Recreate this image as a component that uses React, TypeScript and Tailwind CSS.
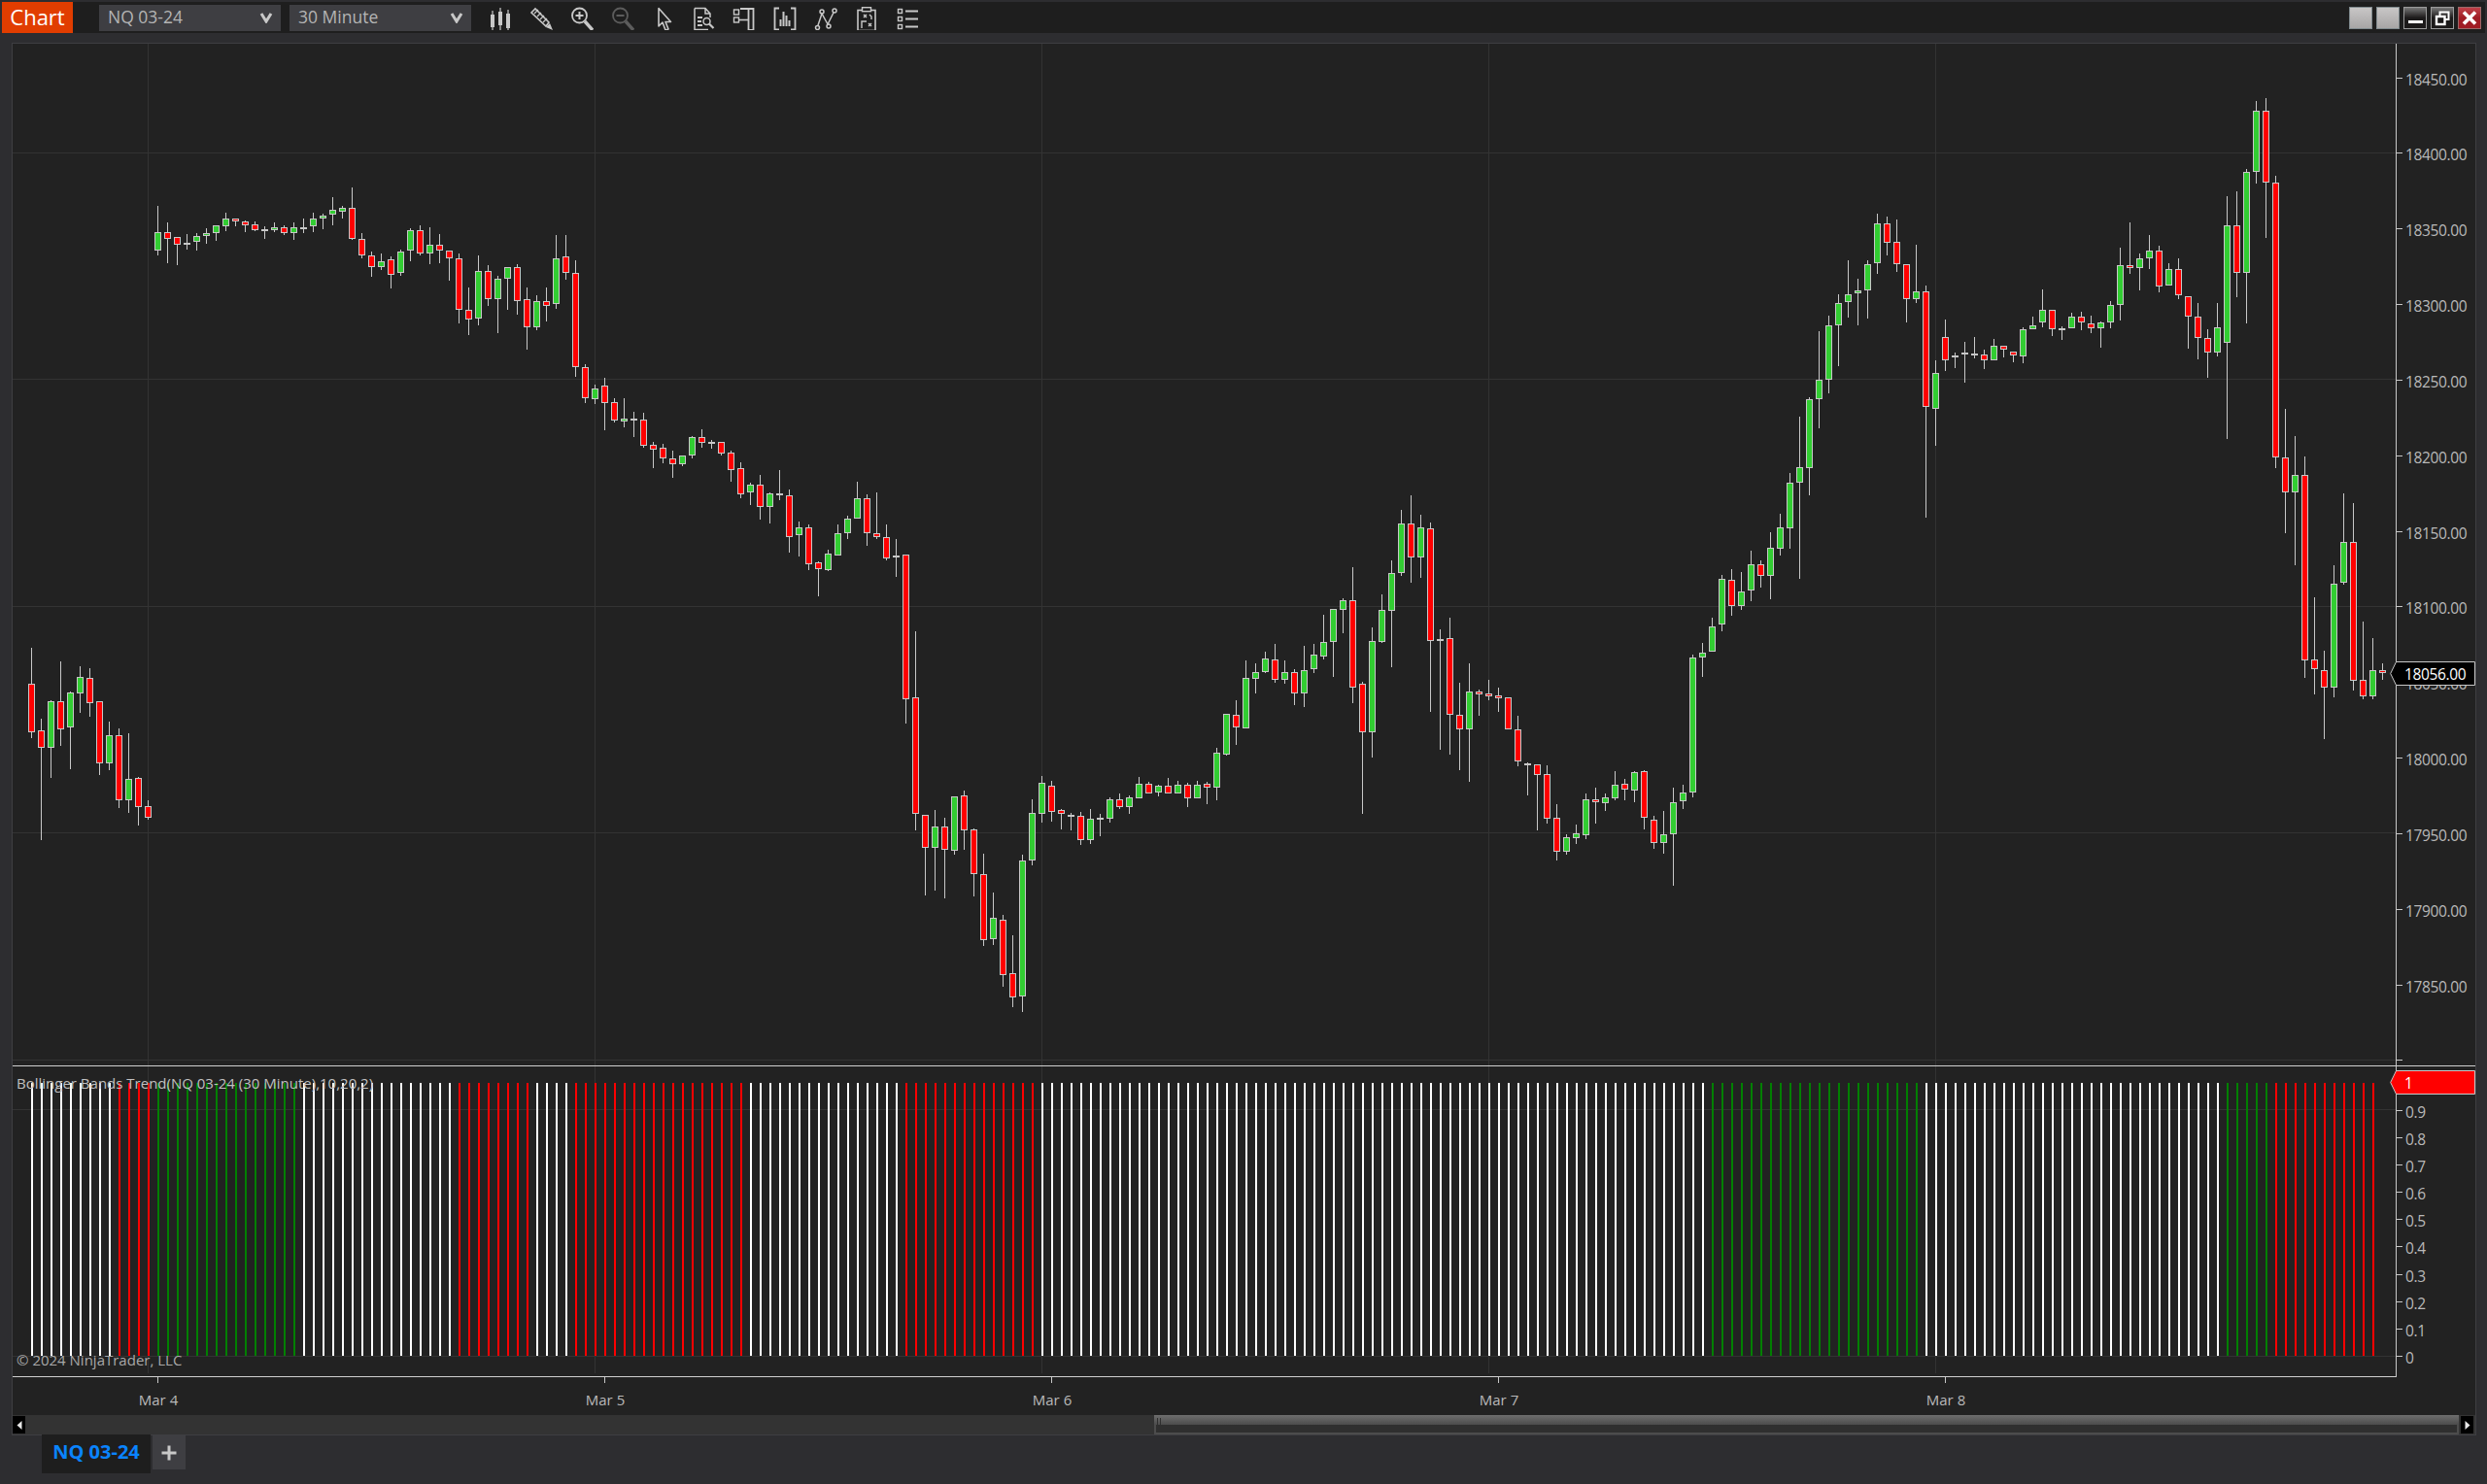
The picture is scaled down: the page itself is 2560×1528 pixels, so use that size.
import React from "react";

type Seg = { x: number; y0: number; k: number; d: string };

const SEGS: Seg[] = [
  { x: 0, y0: 640, k: 1 / 3, d: "r 82 193 341 360,r 300 337 389 675,g 243 247 389 483,r 123 247 332 384,g 216 220 326 456,g 138 172 221 282,r 144 175 251 294,r 247 247 437 474,g 309 352 437 459,r 330 352 551 576,g 345 487 551 591,r 480 484 572 630,r 552 571 605 612" },
  { x: 13, y0: 190, k: 670 / 1568, d: "g 51 115 158 171,r 91 115 132 190,r 127 127 144 194,d 120 141 144 157,g 117 125 139 159,g 105 118 123 143,g 98 99 118 136,g 67 83 100 112,r 81 83 88 101,r 87 88 99 115,r 89 95 109 112,d 101 108 111 131,g 92 102 111 114,r 99 102 116 122,g 92 104 118 133,g 82 102 107 117,g 69 83 100 115,g 71 74 83 108,g 30 62 72 98,g 52 55 65 82,r 8 55 130 133,r 118 130 172 178,r 162 172 198 222,g 167 184 198 206,r 174 181 217 250,g 157 162 214 220,g 105 111 160 185,r 99 109 165 171,g 103 146 165 192,r 120 144 160 190,r 158 160 179 232,r 165 179 303 335,r 247 301 326 363,g 171 209 324 339,r 195 209 275 293,g 219 228 275 358,g 199 200 228 302,r 191 200 280 314,r 247 277 345 398,g 267 282 343 351,r 248 282 292 330,g 122 177 289 300,r 122 174 214 229,r 183 212 439 463,r 432 439 516 527,g 483 492 518 529,r 466 485 526 592,r 514 525 568 573,g 514 565 570 585,d 548 564 566 608,r 550 567 629 634,r 620 628 638 683,r 624 635 661 672,r 641 659 675 707,g 654 654 675 679,g 605 609 654 660,r 590 609 622 634,d 615 621 625 637,r 620 621 648 653,r 642 647 687 716,r 670 684 746 756,g 718 724 743 772,r 700 724 778 807,g 741 745 776 817,d 688 744 748 761,r 736 750 849 887,g 812 825 846 896,r 820 825 914 929,r 907 911 926 992,g 879 890 928 931,g 818 839 893 893,g 799 806 839 854,g 716 757 806 806,r 747 757 839 871,r 742 839 849 854,r 818 849 900 906,d 854 895 898 945" },
  { x: 90, y0: 500, k: 550 / 1568, d: "r 202 203 628 698,r 428 622 965 1012,r 967 967 1062 1203,g 952 1002 1062 1189,r 975 1002 1070 1212,g 912 913 1071 1083,r 895 910 1013 1069,r 1005 1010 1141 1206,r 1080 1141 1335 1351,g 1195 1270 1332 1348,r 1260 1273 1436 1471,r 1320 1432 1503 1531,g 1083 1101 1501 1545,g 921 962 1101 1115,g 852 873 963 989,r 867 882 957 986,r 948 953 965 1009,d 962 967 971 1012,r 958 970 1042 1055,g 949 979 1040 1052,d 964 975 977 1029,g 915 922 977 989,r 905 922 943 949,g 909 916 943 964,g 855 876 917 917,r 870 876 903 903,g 878 882 900 912,r 858 882 903 903,g 867 879 903 903,r 872 879 917 944,g 867 879 917 917,r 870 876 888 935,g 770 785 888 924,g 671 671 789 793,r 630 674 711 761,g 514 565 712 712,g 522 546 566 610,g 488 508 546 550,r 465 511 571 579,g 513 548 571 582,r 539 546 611 644,g 470 543 611 650,g 465 497 538 550,g 379 460 501 510,g 363 363 458 562,g 331 335 364 433,r 239 337 592 639,r 577 583 723 964,g 416 457 723 798,g 319 366 458 462,g 220 258 367 533,g 71 112 258 265,r 29 110 212 285,g 86 124 210 271,r 108 126 455 664,d 422 450 453 775,r 388 449 672 790,r 579 674 717 835,g 522 603 717 870,r 599 603 614 676,r 570 611 620 629,r 593 617 623 664,r 622 622 717 717,r 676 717 811 824,r 813 814 820 909,r 819 819 849 1012,r 822 848 979 992,r 935 976 1074 1100,g 1024 1033 1074 1083,g 995 1022 1034 1052,g 905 922 1025 1038,r 887 922 928 992,g 905 916 931 955,g 838 879 917 924,r 862 876 893 924,g 838 842 894 929,r 835 839 974 1009" },
  { x: 167, y0: 90, k: 830 / 1568, d: "r 1417 1424 1470 1481,g 1407 1452 1470 1490,g 1362 1390 1452 1552,g 1356 1371 1388 1403,g 1103 1108 1371 1381,g 1081 1099 1108 1146,g 1031 1048 1098 1098,g 948 955 1044 1058,r 937 957 1008 1028,g 943 981 1008 1016,g 901 927 978 999,r 920 927 951 973,g 865 896 951 996,g 829 855 898 911,g 750 768 857 897,g 640 738 768 956,g 603 607 740 793,g 474 568 606 663,g 444 462 568 595,g 402 419 462 542,g 336 402 418 448,g 372 394 401 463,g 337 343 394 450,g 246 265 341 363,r 251 265 303 327,r 257 301 343 359,r 343 343 411 457,g 306 396 411 419,r 385 396 622 837,g 531 556 626 698,r 452 485 530 552,g 516 522 526 546,g 495 515 520 574,d 486 517 519 527,r 510 519 530 548,g 489 502 530 530,r 502 502 511 525,r 513 513 522 535,g 467 470 524 537,g 446 462 471 471,g 393 432 458 467,r 432 432 471 484,d 465 468 469 491,g 438 445 468 468,r 436 445 458 472,r 444 460 468 478,g 456 458 468 506,g 416 424 458 469,g 312 345 424 453,r 263 345 352 363,g 323 332 352 395,g 287 318 333 353,r 307 318 388 399,g 342 354 386 386,r 332 354 405 412,r 407 407 445 508,r 419 445 488 529,r 470 487 515 565,g 419 466 515 523,g 212 269 496 684,r 202 269 360 408,g 159 165 360 459,g 26 46 165 187,r 21 46 186 293,r 172 186 719 741,r 625 719 787 867,g 678 753 787 929,r 718 753 1114 1149,r 992 1112 1132 1181,r 1096 1134 1168 1268,g 929 966 1168 1186,g 790 885 964 967,r 809 885 1155 1173,r 1039 1153 1185 1190,g 1071 1134 1185 1190,r 1120 1133 1140 1152" },
];

type Candle = { cx: number; c: string; h: number; t: number; b: number; l: number };

const CANDLES: Candle[] = SEGS.flatMap((s) =>
  s.d.split(",").map((row, n) => {
    const [c, h, t, b, l] = row.split(" ");
    const f = (v: string) => s.y0 + Number(v) * s.k;
    return { cx: 32.5 + 10 * (s.x + n), c, h: f(h), t: f(t), b: f(b), l: f(l) };
  })
);

const FILL: Record<string, string> = { r: "#ff0000", g: "#32cd32", d: "#c8c8c8" };

function trendColor(i: number) {
  if (i <= 8) return "#ffffff";
  if (i <= 12) return "#ff0000";
  if (i <= 27) return "#008000";
  if (i <= 43) return "#ffffff";
  if (i <= 51) return "#ff0000";
  if (i <= 55) return "#ffffff";
  if (i <= 73) return "#ff0000";
  if (i <= 89) return "#ffffff";
  if (i <= 103) return "#ff0000";
  if (i <= 172) return "#ffffff";
  if (i <= 194) return "#008000";
  if (i <= 225) return "#ffffff";
  if (i <= 230) return "#008000";
  return "#ff0000";
}

const GRID_X = [152.5, 612.5, 1072.5, 1532.5, 1992.5];
const GRID_Y = [157.5, 390.5, 624.5, 857.5, 1091.5];
const PRICES = ["18450.00", "18400.00", "18350.00", "18300.00", "18250.00", "18200.00", "18150.00", "18100.00", "18050.00", "18000.00", "17950.00", "17900.00", "17850.00", ""];
const LEVELS = ["0.9", "0.8", "0.7", "0.6", "0.5", "0.4", "0.3", "0.2", "0.1", "0"];
const DATES = ["Mar 4", "Mar 5", "Mar 6", "Mar 7", "Mar 8"];

function PriceChart() {
  return (
    <svg width={2453} height={1052} viewBox="13 45 2453 1052" className="block">
      {GRID_X.map((x) => (
        <line key={x} x1={x} x2={x} y1={45} y2={1097} stroke="#333333" />
      ))}
      {GRID_Y.map((y) => (
        <line key={y} x1={13} x2={2466} y1={y} y2={y} stroke="#333333" />
      ))}
      {CANDLES.map((k) => {
        const top = Math.round(k.t) + 0.5;
        const bot = Math.max(Math.round(k.b) - 0.5, top + 1);
        return (
          <g key={k.cx}>
            <line x1={k.cx} x2={k.cx} y1={Math.round(k.h)} y2={Math.round(k.l)} stroke="#c8c8c8" />
            <rect x={k.cx - 3} y={top} width={6} height={bot - top} fill={FILL[k.c]} stroke="#c8c8c8" />
          </g>
        );
      })}
    </svg>
  );
}

function TrendChart() {
  return (
    <svg width={2453} height={319} viewBox="13 1098 2453 319" className="block">
      {GRID_X.map((x) => (
        <line key={x} x1={x} x2={x} y1={1098} y2={1414} stroke="#333333" />
      ))}
      <line x1={13} x2={2466} y1={1142.5} y2={1142.5} stroke="#333333" />
      <line x1={13} x2={2466} y1={1396.5} y2={1396.5} stroke="#333333" />
      {Array.from({ length: 242 }, (_, i) => (
        <rect key={i} x={32 + 10 * i} y={1115} width={2} height={281} fill={trendColor(i)} />
      ))}
    </svg>
  );
}

const ic = "#c8c8c8";

const ICONS: React.ReactNode[] = [
  <g key="candles" stroke={ic} fill={ic}>
    <path d="M4 4v20M12 1v23M20 3v21" fill="none" strokeWidth={1.2} />
    <rect x={2} y={8} width={4} height={13} stroke="none" />
    <rect x={10} y={5} width={4} height={14} stroke="none" />
    <rect x={18} y={7} width={4} height={15} stroke="none" />
  </g>,
  <g key="pencil" fill="none" stroke={ic}>
    <path d="M2 6L6 2L20 16L17 20Z" strokeWidth={1.6} />
    <path d="M5 7L9 3M8 10L12 6M11 13L15 9M14 16L18 12" strokeWidth={1.2} />
    <path d="M17 21L21 17L24 24Z" fill={ic} stroke="none" />
  </g>,
  <g key="zoomin" fill="none" stroke={ic}>
    <circle cx={9.5} cy={9} r={7.5} strokeWidth={1.8} />
    <path d="M5.5 9h8M9.5 5v8" strokeWidth={2} />
    <path d="M15 15L23 24" strokeWidth={3.4} />
  </g>,
  <g key="zoomout" fill="none" stroke="#5c5c5c">
    <circle cx={9.5} cy={9} r={7.5} strokeWidth={1.8} />
    <path d="M5.5 9h8" strokeWidth={2} />
    <path d="M15 15L23 24" strokeWidth={3.4} />
  </g>,
  <path key="cursor" d="M7 1.5V20L11 16L14 24L17 23L14 15.5H19.5Z" fill="none" stroke={ic} strokeWidth={1.6} strokeLinejoin="round" />,
  <g key="doc" fill="none" stroke={ic} strokeWidth={1.5}>
    <path d="M3 1.5H14L19 7V11M14 1.5V7H19M3 1.5V23.5H17" />
    <path d="M6 11h5M6 15h4M6 19h5" strokeWidth={1.8} />
    <circle cx={15.5} cy={15} r={3.5} />
    <path d="M18 17.5L22.5 22" strokeWidth={2.2} />
  </g>,
  <g key="databox" fill="none" stroke={ic}>
    <path d="M8 2H21.5V24H16.5V2" strokeWidth={1.8} />
    <rect x={1.5} y={3} width={5} height={5} strokeWidth={1.4} />
    <rect x={1.5} y={11} width={5} height={5} strokeWidth={1.4} />
    <path d="M6.5 13.5h10" strokeWidth={1.6} />
  </g>,
  <g key="bars" fill="none" stroke={ic}>
    <path d="M6 1.5H1.5V23.5H6M18 1.5H22.5V23.5H18" strokeWidth={1.8} />
    <path d="M7.5 13V20M10.5 5V20M13.5 9V20M16.5 14V20" strokeWidth={2} />
  </g>,
  <g key="nodes" fill="none" stroke={ic} strokeWidth={1.5}>
    <path d="M4 19L8 7L14 18L20 6" />
    <circle cx={3.5} cy={21.5} r={2} />
    <circle cx={8} cy={5} r={2} />
    <circle cx={15} cy={20} r={2} />
    <circle cx={21} cy={4} r={2} />
  </g>,
  <g key="clip" fill="none" stroke={ic} strokeWidth={1.4}>
    <rect x={3} y={3.5} width={18} height={21} strokeWidth={1.6} />
    <rect x={7.5} y={0.7} width={9} height={4} fill="#1e1e1e" />
    <path d="M9 8l3 3m0-3l-3 3M14 17l3 3m0-3l-3 3" />
    <path d="M7 22V15H12M15 8L17 10V13" />
  </g>,
  <g key="list" fill="none" stroke={ic}>
    <rect x={2.5} y={2.5} width={4} height={4} strokeWidth={1.4} />
    <rect x={2.5} y={10.5} width={4} height={4} strokeWidth={1.4} />
    <rect x={2.5} y={18.5} width={4} height={4} strokeWidth={1.4} />
    <path d="M10 4.5H23M10 12.5H23M10 20.5H23" strokeWidth={2} />
  </g>,
];

function Chevron() {
  return (
    <svg width={14} height={12} viewBox="0 0 14 12" className="ml-auto mr-[8px]">
      <path d="M2 2L7 10L12 2" fill="none" stroke="#c8c8c8" strokeWidth={3} />
    </svg>
  );
}

function SelectBox({ label }: { label: string }) {
  return (
    <div className="flex items-center w-[187px] h-[27px] mt-[3px] bg-[#3e3e42] pl-[9px] pb-[2px] text-[17.5px] leading-none text-[#b4b4b4]">
      <span>{label}</span>
      <Chevron />
    </div>
  );
}

function WinButton({ kind }: { kind: "gray" | "min" | "restore" | "close" }) {
  if (kind === "gray") {
    return <div className="w-[24px] h-[23px] border border-[#808a8e] bg-linear-to-b from-[#c8c6c6] to-[#a8a6a6]" />;
  }
  if (kind === "min") {
    return (
      <div className="w-[24px] h-[23px] border border-[#9a9a9a] bg-linear-to-b from-[#777777] via-[#1c1a1a] to-[#1c1a1a] flex items-end justify-center pb-[5px]">
        <div className="w-[15px] h-[3px] bg-white" />
      </div>
    );
  }
  if (kind === "restore") {
    return (
      <div className="w-[24px] h-[23px] border border-[#9a9a9a] bg-linear-to-b from-[#777777] via-[#1c1a1a] to-[#1c1a1a] flex items-center justify-center">
        <svg width={16} height={16} viewBox="0 0 16 16">
          <path d="M5.5 5V1.5H14.5V9H11" fill="none" stroke="#fff" strokeWidth={2} />
          <rect x={2} y={6} width={8.5} height={8} fill="none" stroke="#fff" strokeWidth={2.4} />
        </svg>
      </div>
    );
  }
  return (
    <div className="w-[24px] h-[23px] border border-[#9a6a6a] bg-linear-to-b from-[#c04048] via-[#a01c24] to-[#a01c24] flex items-center justify-center">
      <svg width={16} height={15} viewBox="0 0 16 15">
        <path d="M2 1.5L14 13.5M14 1.5L2 13.5" stroke="#fff" strokeWidth={3.6} />
      </svg>
    </div>
  );
}

function Flag({ children, fill }: { children: string; fill: string }) {
  return (
    <div className="relative w-[88px] h-[25px]">
      <svg width={88} height={25} viewBox="0 0 88 25" className="absolute inset-0">
        <path d="M6.5 0.5H87.5V24.5H6.5L0.7 12.5Z" fill={fill} stroke="#c8c8c8" />
      </svg>
      <span className="absolute left-[15px] top-[1px] leading-[25px] text-[15.5px] tracking-[-0.35px] text-white">{children}</span>
    </div>
  );
}

export default function App() {
  return (
    <div className="flex flex-col w-[2560px] h-[1528px] overflow-hidden bg-[#2d2d30] px-[2px] pt-[2px] font-['Open_Sans',sans-serif]">
      <div className="flex h-[32px] shrink-0 bg-[#1e1e1e]">
        <div className="flex items-center justify-center w-[73px] pb-[3px] bg-[#e13d00] text-[22px] leading-none text-white">Chart</div>
        <div className="ml-[27px]">
          <SelectBox label="NQ 03-24" />
        </div>
        <div className="ml-[9px]">
          <SelectBox label="30 Minute" />
        </div>
        <div className="flex ml-[9px]">
          {ICONS.map((icon, i) => (
            <div key={i} className="flex items-center justify-center w-[41.9px] h-[32px] pt-[2px]">
              <svg width={24} height={24} viewBox="0 0 24 24">
                {icon}
              </svg>
            </div>
          ))}
        </div>
        <div className="flex gap-[4px] ml-auto mr-[4px] mt-[5px]">
          <WinButton kind="gray" />
          <WinButton kind="gray" />
          <WinButton kind="min" />
          <WinButton kind="restore" />
          <WinButton kind="close" />
        </div>
      </div>

      <div className="flex flex-col w-[2537px] h-[1434px] shrink-0 ml-[10px] mt-[10px] border border-[#3e3e42] bg-[#222222] text-[15px] text-[#b9b9b9]">
        <div className="flex h-[1052px] shrink-0">
          <div className="w-[2453px]">
            <PriceChart />
          </div>
          <div className="relative flex-1 flex flex-col pt-[34.5px] border-l border-[#c8c8c8]">
            {PRICES.map((p, i) => (
              <div key={i} className="flex items-start h-[77.85px] shrink-0">
                <div className="w-[6px] h-px bg-[#c8c8c8]" />
                <span className="ml-[3px] -mt-[8px] leading-[20px] text-[15.5px] tracking-[-0.35px]">{p}</span>
              </div>
            ))}
            <div className="absolute left-[-7px] top-[636px]">
              <Flag fill="#000000">18056.00</Flag>
            </div>
          </div>
        </div>

        <div className="flex h-[321px] shrink-0 border-t border-[#d0d0d0]">
          <div className="relative w-[2453px] border-b border-[#d0d0d0]">
            <TrendChart />
            <span className="absolute left-[4px] top-[7px] leading-[20px] text-[#c0c0c0]">Bollinger Bands Trend(NQ 03-24 (30 Minute),10,20,2)</span>
            <span className="absolute left-[4px] top-[292px] leading-[20px] text-[#a8a8a8]">© 2024 NinjaTrader, LLC</span>
          </div>
          <div className="relative flex-1 flex flex-col pt-[44.5px] border-l border-[#c8c8c8]">
            {LEVELS.map((v) => (
              <div key={v} className="flex items-start h-[28.2px] shrink-0">
                <div className="w-[6px] h-px bg-[#c8c8c8]" />
                <span className="ml-[3px] -mt-[8px] leading-[20px] text-[15.5px] tracking-[-0.35px]">{v}</span>
              </div>
            ))}
            <div className="absolute left-[-7px] top-[4px]">
              <Flag fill="#ff0000">1</Flag>
            </div>
          </div>
        </div>

        <div className="flex h-[39px] shrink-0 pl-[149px]">
          {DATES.map((d) => (
            <div key={d} className="w-[460px] shrink-0">
              <div className="w-px h-[6px] bg-[#c8c8c8]" />
              <span className="block w-[60px] -ml-[29px] mt-[7px] text-center leading-[20px]">{d}</span>
            </div>
          ))}
        </div>

        <div className="flex items-stretch h-[20px] shrink-0 bg-[#333333] pr-[2px]">
          <div className="flex items-center justify-center w-[13px] my-[1px] bg-black">
            <svg width={6} height={9} viewBox="0 0 6 9">
              <path d="M5.5 0V9L0.5 4.5Z" fill="#e8e8e8" />
            </svg>
          </div>
          <div className="flex flex-col w-[1343px] ml-auto">
            <div className="relative h-[10px] bg-linear-to-b from-[#6e6e6e] to-[#4c4c4c]">
              <div className="absolute left-[3px] top-[3px] h-[7px] w-[4px] border-x border-[#2f2f2f]" />
            </div>
            <div className="flex-1 bg-[#2f2f2f] border-x-2 border-b-2 border-[#4c4c4c]" />
          </div>
          <div className="flex items-center justify-center w-[13px] ml-[2px] my-[1px] bg-black">
            <svg width={6} height={9} viewBox="0 0 6 9">
              <path d="M0.5 0V9L5.5 4.5Z" fill="#e8e8e8" />
            </svg>
          </div>
        </div>
      </div>

      <div className="flex items-start ml-[41px] -mt-[1px]">
        <div className="flex items-center justify-center w-[112px] h-[40px] pb-[4px] bg-[#1e1e1e] text-[20px] font-bold leading-none text-[#0a84ff]">NQ 03-24</div>
        <div className="flex items-center justify-center w-[34px] h-[35px] ml-[2px] mt-[1px] bg-[#3e3e42]">
          <svg width={16} height={16} viewBox="0 0 16 16">
            <path d="M8 0.5V15.5M0.5 8H15.5" stroke="#c8c8c8" strokeWidth={3} />
          </svg>
        </div>
      </div>
    </div>
  );
}
